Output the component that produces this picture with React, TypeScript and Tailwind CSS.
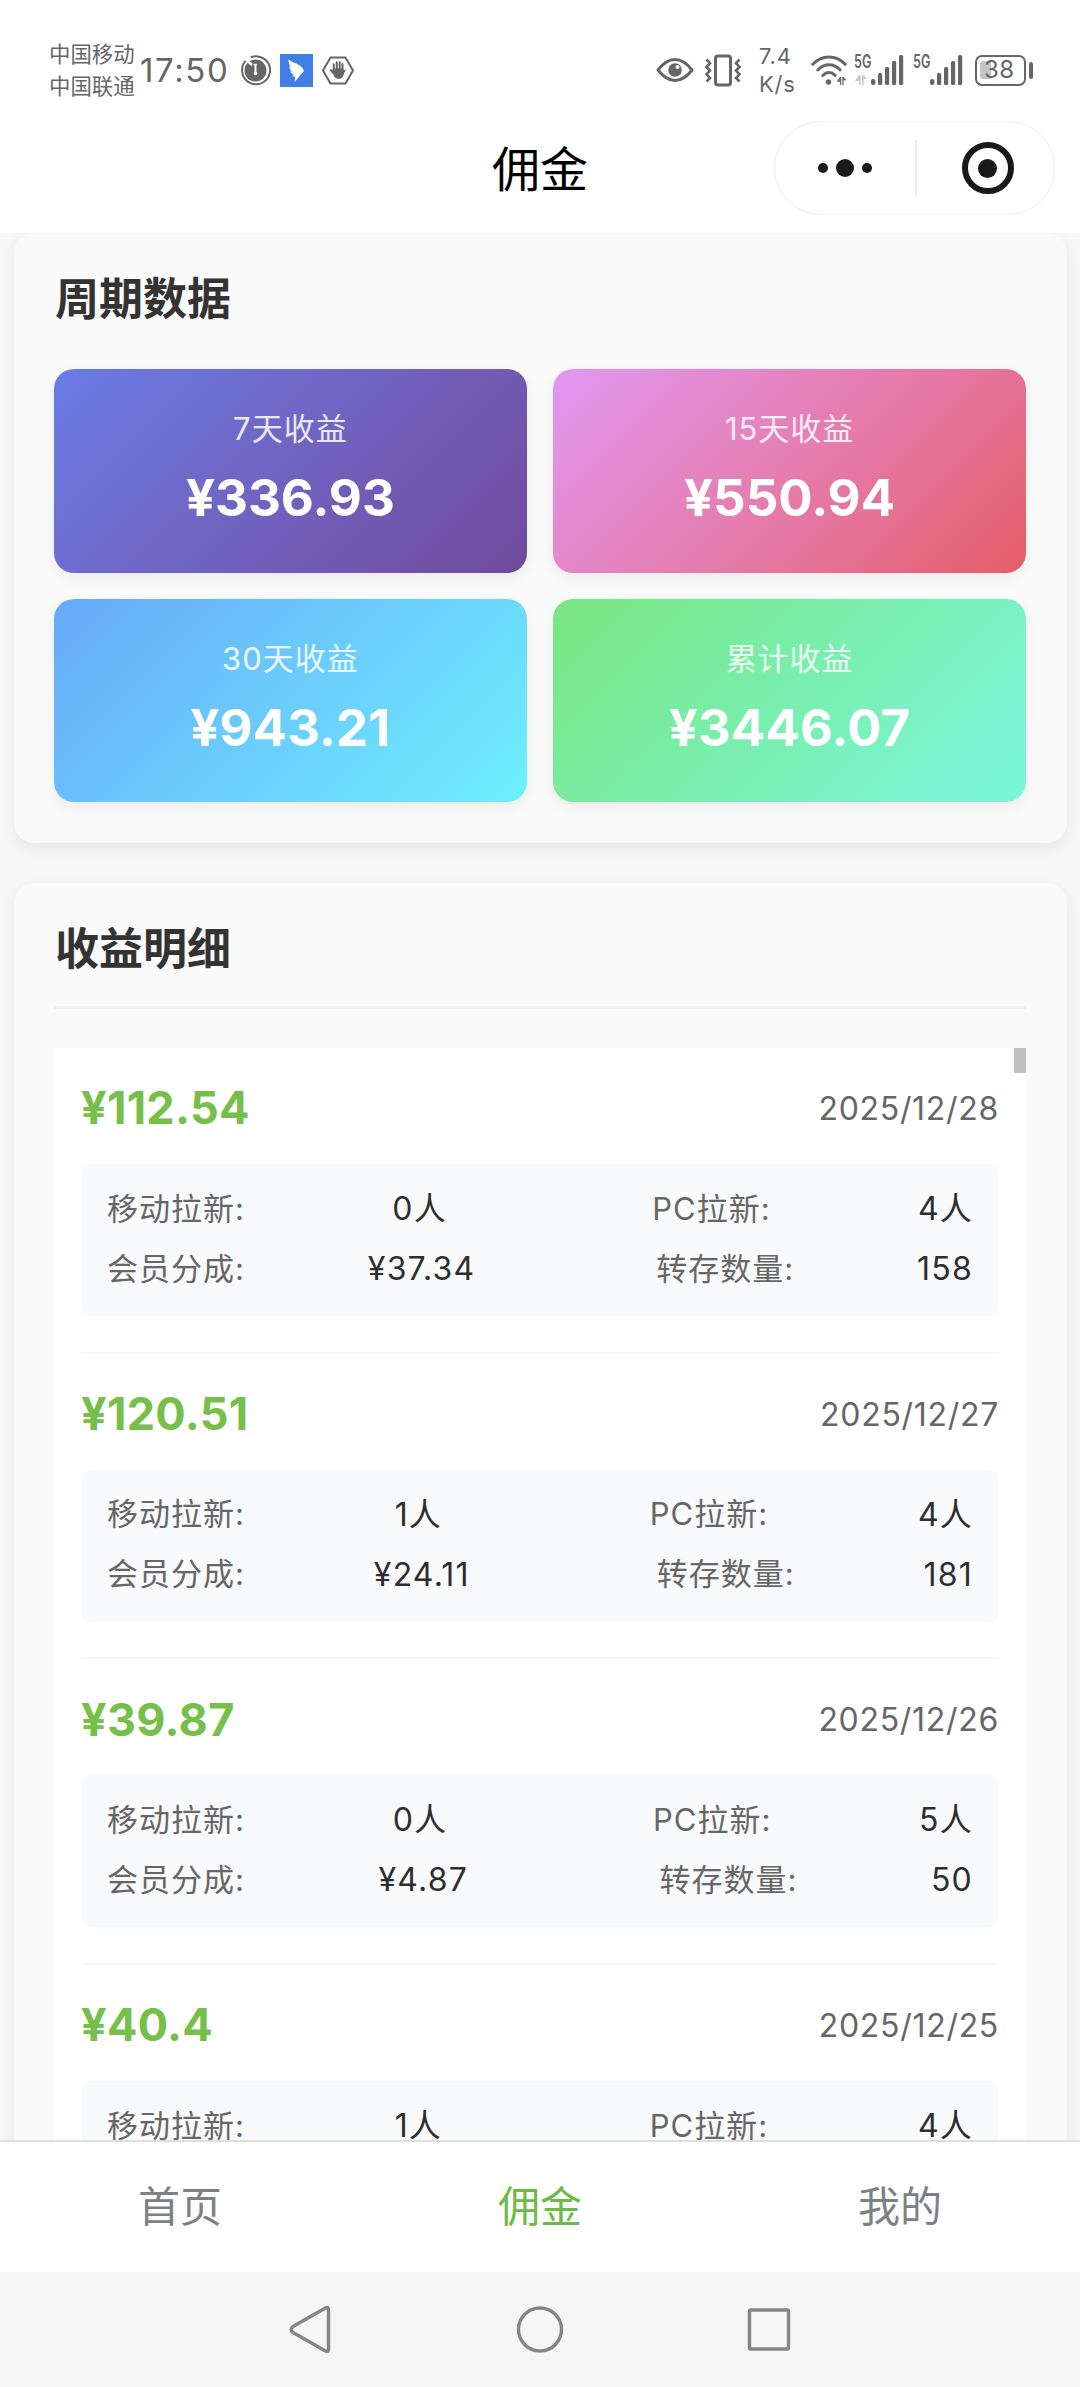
import { ReactNode } from 'react';

interface PeriodStat {
  label: string;
  value: string;
  gradient: string;
}

interface EarningRecord {
  amount: string;
  date: string;
  mobile: string;
  pc: string;
  share?: string;
  saved?: string;
}

const periodStats: PeriodStat[] = [
  { label: '7天收益', value: '¥336.93', gradient: 'from-[#6a7ce6] to-[#704a9b]' },
  { label: '15天收益', value: '¥550.94', gradient: 'from-[#e297f3] to-[#e55c68]' },
  { label: '30天收益', value: '¥943.21', gradient: 'from-[#68a9f8] to-[#6df0fd]' },
  { label: '累计收益', value: '¥3446.07', gradient: 'from-[#7ae67e] to-[#7bf6dd]' },
];

const records: EarningRecord[] = [
  { amount: '¥112.54', date: '2025/12/28', mobile: '0人', pc: '4人', share: '¥37.34', saved: '158' },
  { amount: '¥120.51', date: '2025/12/27', mobile: '1人', pc: '4人', share: '¥24.11', saved: '181' },
  { amount: '¥39.87', date: '2025/12/26', mobile: '0人', pc: '5人', share: '¥4.87', saved: '50' },
  { amount: '¥40.4', date: '2025/12/25', mobile: '1人', pc: '4人' },
];

const tabs = [
  { label: '首页', active: false },
  { label: '佣金', active: true },
  { label: '我的', active: false },
];

function SignalBars() {
  return (
    <svg className="h-[30px] w-[33px]" viewBox="0 0 33 30" fill="#666">
      <rect x="0" y="24" width="4.4" height="6" rx="2" />
      <rect x="7" y="18" width="4.2" height="12" rx="1.5" />
      <rect x="14" y="12" width="4.2" height="18" rx="1.5" />
      <rect x="21" y="6" width="4.2" height="24" rx="1.5" />
      <rect x="28" y="0" width="4.2" height="30" rx="1.5" />
    </svg>
  );
}

function DataArrows({ className }: { className: string }) {
  return (
    <svg className={className} viewBox="0 0 12 10" fill="currentColor">
      <path d="M4 0h1.6v10H4V6H0zM7 0h1.6L12 4H8.600v6H7z" />
    </svg>
  );
}

function StatusBar() {
  return (
    <div className="flex h-[108px] shrink-0 items-center pl-[49px] pt-8 text-[#666]">
      <div className="w-[86px] text-[21.4px] leading-8">
        <div>中国移动</div>
        <div>中国联通</div>
      </div>
      <div className="ml-[5px] w-[91px] text-[33px] leading-none tracking-[1.600px]">17:50</div>
      <svg className="ml-[9px] size-[31px]" viewBox="0 0 31 31" fill="none">
        <path d="M7 4.600A14 14 0 1 0 11 2.200" stroke="#666" strokeWidth="2" />
        <circle cx="15.500" cy="15.500" r="11" fill="#666" />
        <path d="M5.500 4l6.500 6" stroke="#fff" strokeWidth="2.400" />
        <path d="M15.500 9v9" stroke="#fff" strokeWidth="2" />
        <path d="M13.500 9.500h3" stroke="#fff" strokeWidth="1.500" />
        <circle cx="15.500" cy="18.500" r="1.800" fill="#fff" />
      </svg>
      <svg className="ml-[9px] size-[33px]" viewBox="0 0 33 33">
        <rect width="33" height="33" fill="#3f7fe6" />
        <path
          d="M8.500 5.200c4 3.500 9.500 4.300 12.500 7.400 1.300 1.400 2.800 3.200 2.900 4.500l-3.500 3.900-5.700 7 .4-5.200-2.600-.5 1.400-1.500c-2.200-1-3-1.900-3.700-3.300l1.700.1C9.900 15.700 9.300 14 9.100 12.300l1.500.6C9 10.300 8.400 7.700 8.500 5.200z"
          fill="#fff"
        />
      </svg>
      <svg className="ml-2 h-[31px] w-[34px]" viewBox="0 0 34 31" fill="none">
        <path d="M9.500 2.500h15l7.500 13-7.500 13h-15L2 15.500z" stroke="#666" strokeWidth="2" strokeLinejoin="round" />
        <path
          d="M12.800 16V9.200M15.800 14V7.200M18.700 14V7.200M21.500 15V9M12.300 18l-2.500-3"
          stroke="#666"
          strokeWidth="2"
          strokeLinecap="round"
        />
        <path d="M11.800 13.500h10.700v1.700l2.300-1-2.300 5.800c-1 2.700-2.100 3.800-4.400 3.800-3.200 0-4.200-1-5.500-3.600z" fill="#666" />
      </svg>

      <svg className="ml-[301px] h-[26px] w-[38px]" viewBox="0 0 38 26" fill="none">
        <path
          d="M2 13C7.500 5.800 12.600 2.500 19 2.500S30.500 5.800 36 13c-5.500 7.200-10.600 10.500-17 10.500S7.500 20.200 2 13z"
          stroke="#666"
          strokeWidth="3"
          strokeLinejoin="round"
        />
        <circle cx="19" cy="13" r="6.800" fill="#666" />
        <circle cx="21.500" cy="10" r="2" fill="#fff" />
      </svg>
      <svg className="ml-[10px] h-[33px] w-[38px]" viewBox="0 0 38 33" fill="none" stroke="#666" strokeWidth="2.600">
        <rect x="11.500" y="2" width="15" height="29" rx="2.500" strokeWidth="3" />
        <path d="M2.500 5.500l3.500 3.700-3.500 3.700 3.500 3.700-3.500 3.700 3.500 3.700-3.500 3.500" />
        <path d="M35.500 5.500L32 9.200l3.500 3.700-3.500 3.700 3.500 3.700-3.500 3.700 3.500 3.500" />
      </svg>
      <div className="ml-[17px] w-9 text-[22px] leading-7 tracking-[0.800px]">
        <div>7.4</div>
        <div>K/s</div>
      </div>
      <div className="relative ml-4">
        <svg className="h-[30px] w-[36px]" viewBox="0 0 36 30" fill="none" stroke="#666" strokeWidth="3" strokeLinecap="round">
          <path d="M1.800 9.300C10.500-.6 25.500-.6 34.200 9.300" />
          <path d="M6.800 15c6.400-7 16-7 22.400 0" />
          <path d="M11.800 20.500c3.800-3.900 8.600-3.900 12.400 0" />
          <circle cx="17.500" cy="27" r="2.700" fill="#666" stroke="none" />
        </svg>
        <DataArrows className="absolute bottom-0 left-[25px] h-[8px] w-[11px]" />
      </div>
      <div className="ml-[7px] flex h-[30px] w-[17px] flex-col justify-between">
        <span className="origin-left scale-x-[0.68] text-[18.500px] font-semibold leading-[13px]">5G</span>
        <DataArrows className="h-[10px] w-[14px] text-[#c9c9c9]" />
      </div>
      <SignalBars />
      <div className="ml-[9px] flex h-[30px] w-[17px]">
        <span className="origin-left scale-x-[0.68] text-[18.500px] font-semibold leading-[13px]">5G</span>
      </div>
      <SignalBars />
      <div className="ml-[12px] flex h-[31px] w-[51px] items-center rounded-[7px] border-[2.500px] border-[#666] pl-[3px]">
        <div className="h-[18px] w-[11px] shrink-0 rounded-l-[3px] bg-[#c4c4c4]" />
        <span className="-ml-[7px] text-[24px] leading-none tracking-[0.500px]">38</span>
      </div>
      <div className="ml-[3px] h-[17px] w-1 rounded-sm bg-[#666]" />
    </div>
  );
}

function TitleBar() {
  return (
    <div className="relative flex h-[125px] shrink-0 justify-center">
      <h1 className="mt-[38px] text-[48px] leading-[48px] text-black">佣金</h1>
      <div className="absolute right-[25px] top-[13px] flex h-[94px] w-[281px] items-center rounded-full border-[1.500px] border-[#ededed] bg-white">
        <div className="flex w-[140px] items-center justify-center gap-[8px]">
          <span className="size-[10px] rounded-full bg-[#191919]" />
          <span className="size-[18px] rounded-full bg-[#191919]" />
          <span className="size-[10px] rounded-full bg-[#191919]" />
        </div>
        <div className="h-[57px] w-[1.500px] bg-[#ececec]" />
        <div className="flex flex-1 justify-center pl-[5px]">
          <div className="flex size-[52px] items-center justify-center rounded-full border-[6.500px] border-[#191919]">
            <span className="size-[19px] rounded-full bg-[#191919]" />
          </div>
        </div>
      </div>
    </div>
  );
}

function Card({ className = '', children }: { className?: string; children: ReactNode }) {
  return (
    <section
      className={`mx-[13.500px] rounded-[20px] bg-[#fafafa] px-[40.500px] shadow-[0_5px_14px_rgba(0,0,0,0.07)] ${className}`}
    >
      {children}
    </section>
  );
}

function StatTile({ label, value, gradient }: PeriodStat) {
  return (
    <div
      className={`flex h-[203.500px] flex-col items-center rounded-[20px] bg-linear-135 pt-[40px] text-white shadow-[0_5px_14px_rgba(0,0,0,0.06)] ${gradient}`}
    >
      <div className="text-[31px] leading-[40px] tracking-[1px] text-white/85">{label}</div>
      <div className="mt-[19px] text-[51px] font-bold leading-[60px]">{value}</div>
    </div>
  );
}

function DetailRow({ items }: { items: [string, string, string, string] }) {
  return (
    <div className="flex h-[60px] items-center justify-between text-[31px] tracking-[1px] text-[#666]">
      <span>{items[0]}</span>
      <span className="text-[32px] tracking-[1.200px] text-[#2e2e2e]">{items[1]}</span>
      <span className="ml-[58px]">{items[2]}</span>
      <span className="text-[32px] tracking-[1.200px] text-[#2e2e2e]">{items[3]}</span>
    </div>
  );
}

function RecordItem({ record }: { record: EarningRecord }) {
  return (
    <div className="mx-[27px] h-[305.700px] border-b-2 border-[#f5f5f5] pt-[27px]">
      <div className="flex h-[66px] items-center justify-between">
        <span className="text-[45px] font-bold tracking-[0.300px] text-[#76bf4a]">{record.amount}</span>
        <span className="pt-[2px] text-[32px] tracking-[0.700px] text-[#666]">{record.date}</span>
      </div>
      <div className="mt-[23px] h-[152px] rounded-[10px] bg-[#f9fafc] px-[26px] pt-[15px]">
        <DetailRow items={['移动拉新:', record.mobile, 'PC拉新:', record.pc]} />
        {record.share && record.saved && (
          <DetailRow items={['会员分成:', record.share, '转存数量:', record.saved]} />
        )}
      </div>
    </div>
  );
}

function SystemNav() {
  return (
    <div className="flex h-[115px] shrink-0 justify-center bg-[#f6f6f6]">
      <svg
        className="h-[115px] w-[520px]"
        viewBox="0 0 520 115"
        fill="none"
        stroke="#858585"
        strokeWidth="3.400"
        strokeLinejoin="round"
      >
        <path d="M13 54.500L45.500 36q3-1.500 3 2v39q0 3.500-3 2L13 60.500q-4-3 0-6z" />
        <circle cx="260" cy="57.500" r="21.500" />
        <rect x="469.500" y="38" width="39" height="39" rx="1.500" />
      </svg>
    </div>
  );
}

export default function App() {
  return (
    <div className="flex h-[2387px] w-[1080px] flex-col overflow-hidden bg-white font-['Inter','Noto_Sans_CJK_SC',sans-serif]">
      <StatusBar />
      <TitleBar />

      <main className="min-h-0 flex-1 overflow-hidden bg-[#f7f7f7]">
        <Card className="h-[610px] pt-[44px]">
          <h2 className="pl-px text-[44px] font-bold leading-[44px] text-[#333]">周期数据</h2>
          <div className="mt-[48px] grid grid-cols-2 gap-x-[26.500px] gap-y-[26px]">
            {periodStats.map((stat) => (
              <StatTile key={stat.label} {...stat} />
            ))}
          </div>
        </Card>

        <Card className="mt-[40px] h-[1400px] pt-[44px]">
          <h2 className="border-b-[3px] border-[#f0f0f0] pb-[35px] pl-px text-[44px] font-bold leading-[44px] text-[#333]">
            收益明细
          </h2>
          <div className="relative mt-[39px] h-[1220px] bg-white">
            {records.map((record) => (
              <RecordItem key={record.date} record={record} />
            ))}
            <div className="absolute right-0 top-0 h-[25px] w-3 bg-[#c1c1c1]" />
          </div>
        </Card>
      </main>

      <nav className="grid h-[132px] shrink-0 grid-cols-3 items-center border-t-2 border-[#dedede] text-center text-[42px] leading-none">
        {tabs.map((tab) => (
          <span key={tab.label} className={tab.active ? 'text-[#6cbb45]' : 'text-[#7d8084]'}>
            {tab.label}
          </span>
        ))}
      </nav>
      <SystemNav />
    </div>
  );
}
